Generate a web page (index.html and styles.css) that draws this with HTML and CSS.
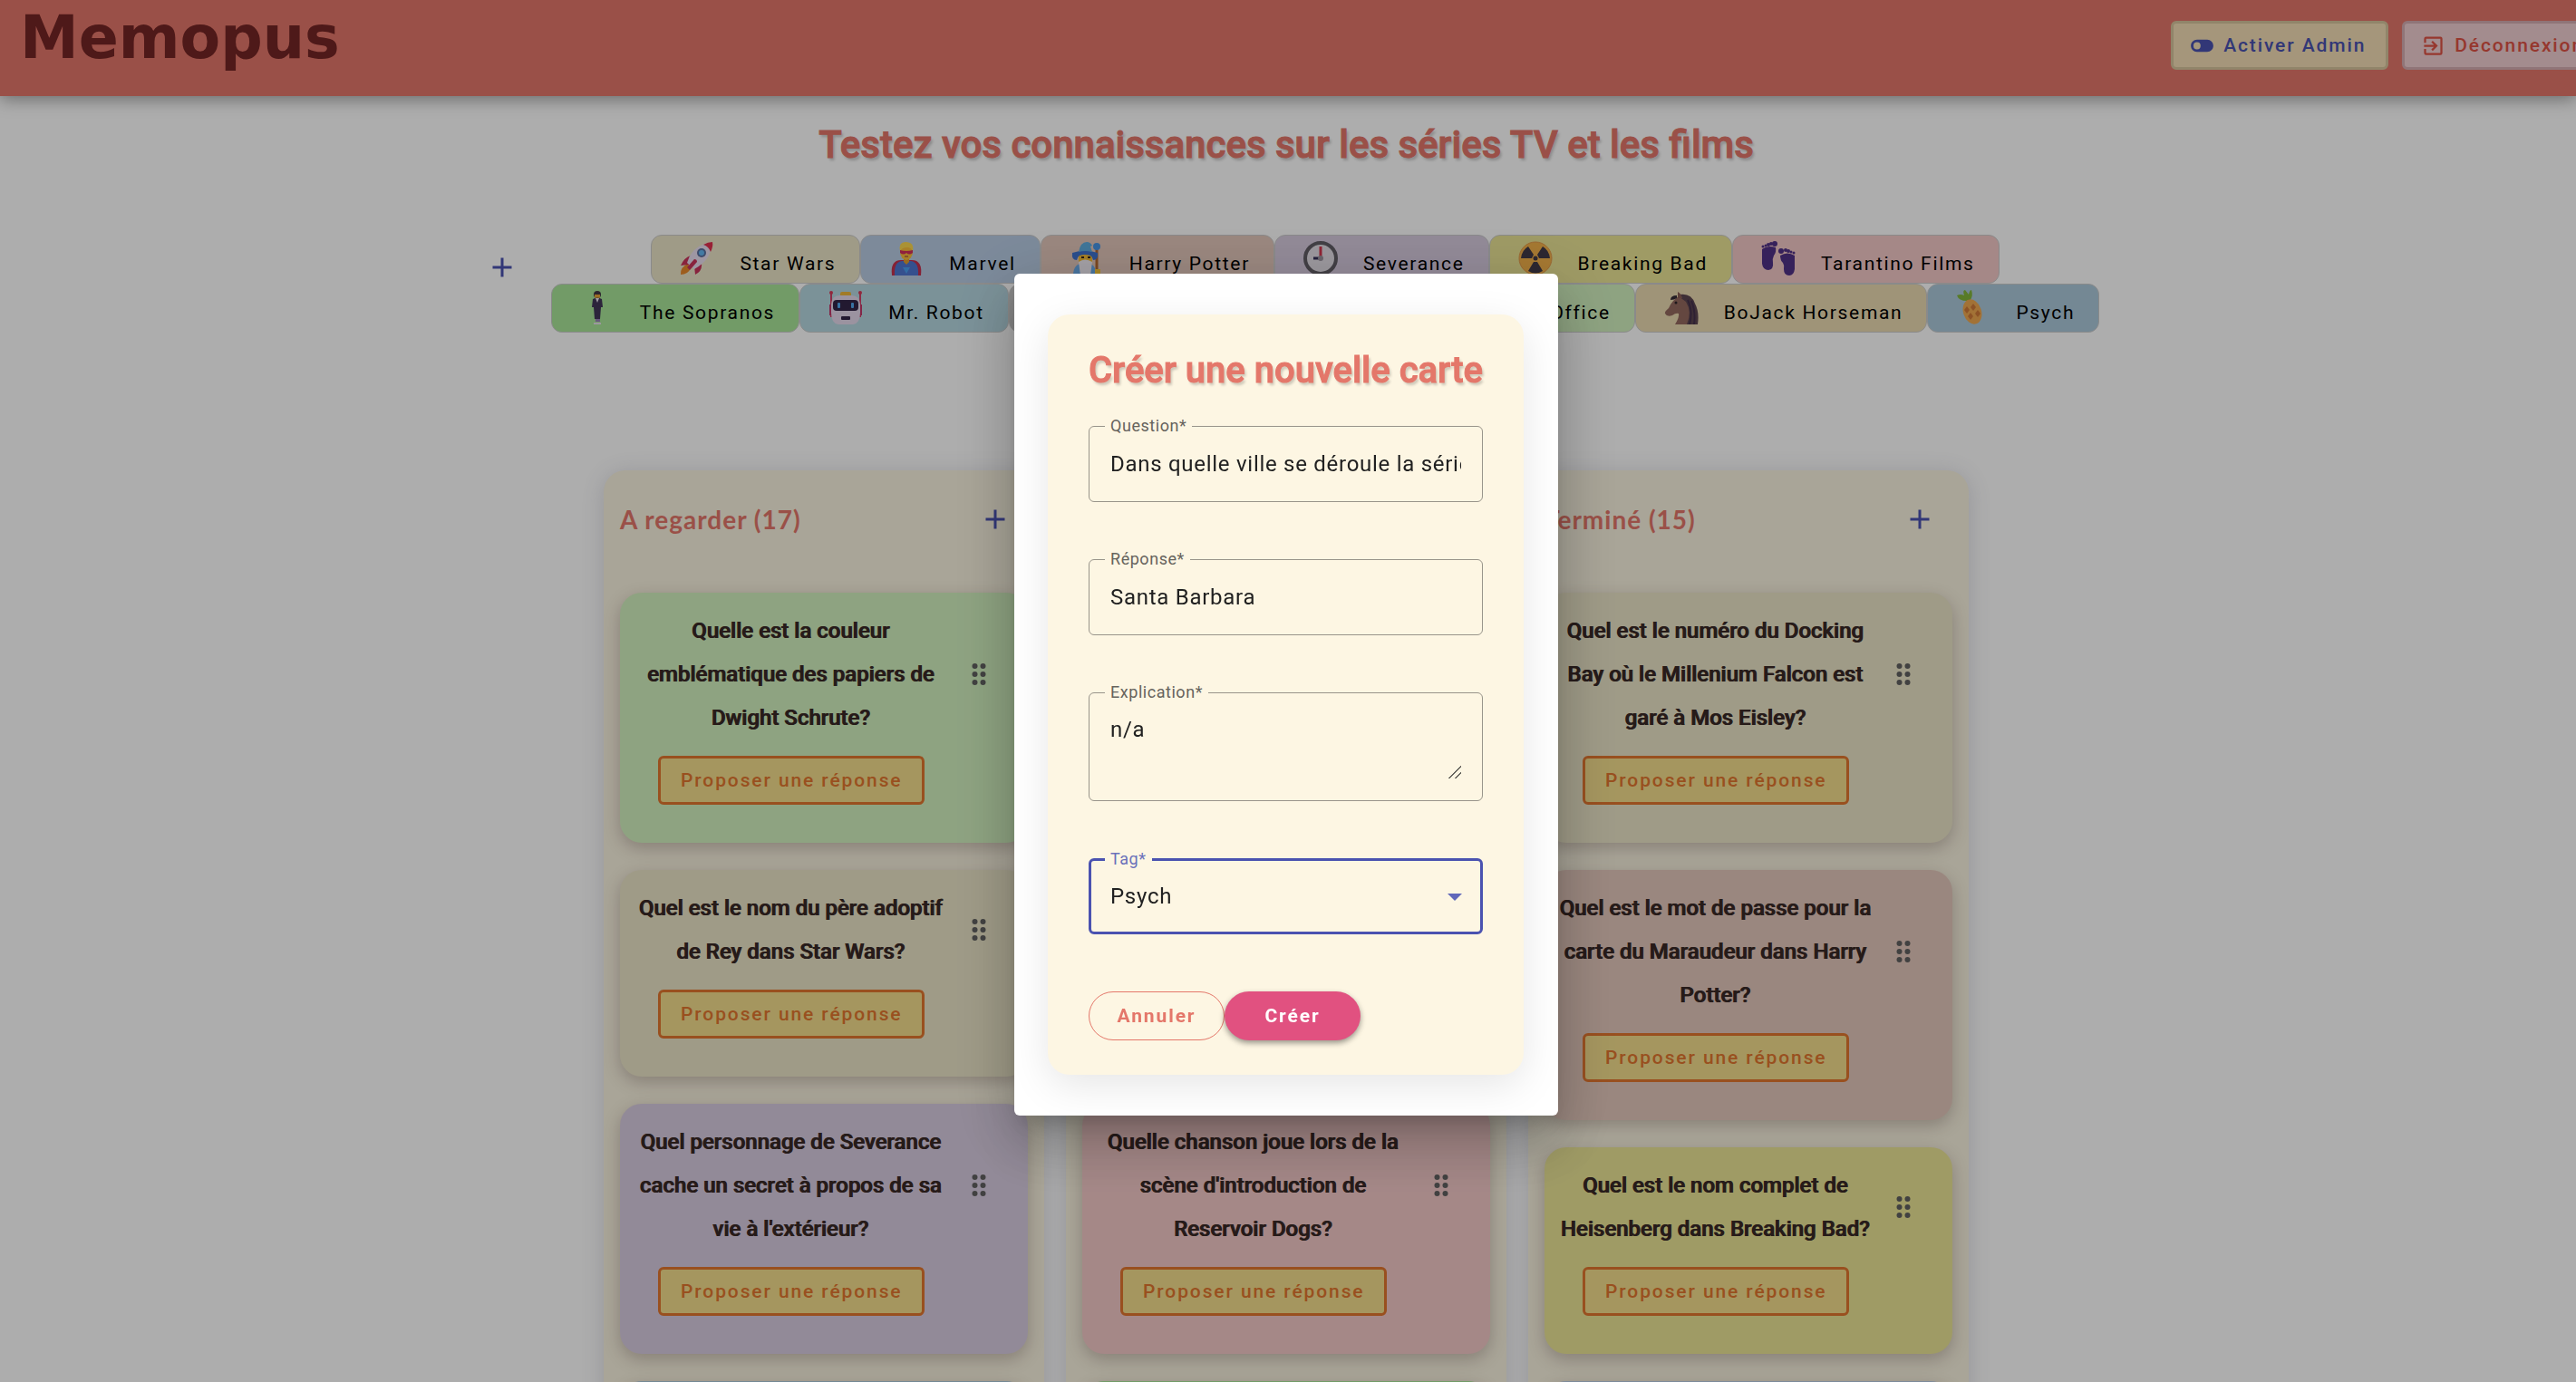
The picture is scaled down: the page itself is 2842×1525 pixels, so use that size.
FILE: index.html
```html
<!DOCTYPE html>
<html lang="fr">
<head>
<meta charset="utf-8">
<title>Memopus</title>
<link rel="stylesheet" href="styles.css">
</head>
<body>
<svg class="defs" aria-hidden="true">
  <symbol id="plus" viewBox="0 0 24 24"><path d="M19 13h-6v6h-2v-6H5v-2h6V5h2v6h6z"/></symbol>
  <symbol id="drag" viewBox="0 0 24 24"><circle cx="9" cy="6" r="2"/><circle cx="15" cy="6" r="2"/><circle cx="9" cy="12" r="2"/><circle cx="15" cy="12" r="2"/><circle cx="9" cy="18" r="2"/><circle cx="15" cy="18" r="2"/></symbol>
</svg>

<header class="topbar">
  <a class="logo" href="#">Memopus</a>
  <div class="topbar-actions">
    <button class="btn btn-admin" type="button">
      <svg class="btn-icon" viewBox="0 0 24 24"><path fill-rule="evenodd" d="M17 6H7c-3.310 0-6 2.690-6 6s2.690 6 6 6h10c3.310 0 6-2.690 6-6s-2.690-6-6-6zM7 15.500a3.500 3.500 0 1 1 0-7 3.500 3.500 0 0 1 0 7z"/></svg>
      Activer Admin
    </button>
    <button class="btn btn-logout" type="button">
      <svg class="btn-icon" viewBox="0 0 24 24"><path d="M10.090 15.590 11.500 17l5-5-5-5-1.410 1.410L12.670 11H3v2h9.670zM19 3H5a2 2 0 0 0-2 2v4h2V5h14v14H5v-4H3v4a2 2 0 0 0 2 2h14a2 2 0 0 0 2-2V5a2 2 0 0 0-2-2z"/></svg>
      Déconnexion
    </button>
  </div>
</header>

<main class="page">
  <h1 class="heading page-title">Testez vos connaissances sur les séries TV et les films</h1>

  <section class="tags">
    <button class="icon-btn" type="button" aria-label="Ajouter un tag"><svg><use href="#plus"/></svg></button>
    <ul class="tag-list">
      <li class="tag t-starwars"><svg class="emoji" viewBox="0 0 38 38">
        <path d="M9 25Q0 29 1 37q8 0 11-7z" fill="#e8892b"/>
        <path d="M12 16Q5 18 1 27l9-1zM24 25q1 8-7 12l-1-9z" fill="#c9345b"/>
        <path d="M8 24Q13 5 35 1 36 20 16 31z" fill="#e9dff0"/>
        <path d="M26 4q5-3 10-3 1 5-2 11-2-6-8-8z" fill="#e0304f"/>
        <circle cx="24" cy="13" r="5" fill="#5a6f9e"/><circle cx="24" cy="13" r="3" fill="#63b5f2"/>
        <path d="M16 20q3 0 3 3l-8 9-3-3z" fill="#c9345b"/></svg>Star Wars</li>
      <li class="tag t-marvel"><svg class="emoji" viewBox="0 0 38 38">
        <path d="M3 38q-2-17 10-17h12q12 0 10 17z" fill="#c4314f"/>
        <path d="M6 38q-1-15 8-16h10q9 1 8 16z" fill="#4f77d1"/>
        <path d="M15 29h8l-4 7z" fill="#4aa0f0"/>
        <path d="M16 18h6v5l-3 3-3-3z" fill="#e09c2e"/>
        <ellipse cx="19" cy="12" rx="7" ry="9" fill="#f8bd3c"/>
        <path d="M12 11Q10 1 18 1q10 0 8 10-2-4-6-4-6 0-8 4z" fill="#fbd84f"/>
        <path d="M12 10q7 2 14 0v3q-4 3-7 0-3 3-7 0z" fill="#d5305a"/>
        <path d="M17 17h4" stroke="#8e3540"/></svg>Marvel</li>
      <li class="tag t-potter"><svg class="emoji" viewBox="0 0 38 38">
        <path d="M30 8v30" stroke="#b56a30" stroke-width="3"/><circle cx="30" cy="6" r="4" fill="#4796e8"/>
        <path d="M4 38q0-14 13-14t12 14z" fill="#6babea"/>
        <path d="M10 15h15v9H10z" fill="#f5bd35"/>
        <path d="M10 23q7-5 15 0l-2 15H12z" fill="#f1edf5"/>
        <path d="M3 13q14-5 28 0 1 8-5 8-1-4-3-5-6-2-12 0-2 1-3 5-6 0-5-8z" fill="#3f73cf"/>
        <path d="M10 12Q12 1 19 1q4 0 6 4l-2 1 2 6q-8-2-15 0z" fill="#5eaee2"/>
        <path d="M13 18h3M20 18h3" stroke="#33251e" stroke-width="2"/><path d="M28 31h6v7h-6z" fill="#f8c638"/></svg>Harry Potter</li>
      <li class="tag t-severance"><svg class="emoji" viewBox="0 0 38 38">
        <circle cx="19" cy="19" r="17" fill="#e5e0e8" stroke="#625e66" stroke-width="4"/>
        <path d="M19 6v13" stroke="#d5364e" stroke-width="3"/><path d="M11 19h8" stroke="#352f58" stroke-width="3"/><circle cx="19" cy="19" r="3" fill="#9b939f"/></svg>Severance</li>
      <li class="tag t-breaking"><svg class="emoji" viewBox="0 0 38 38">
        <circle cx="19" cy="19" r="18" fill="#f4b24a" stroke="#e59b4b"/>
        <path d="M15 19H3q1-9 8-13l6 9zM23 19h12q-1-9-8-13l-6 9zM17 23l-6 10q8 5 16 0l-6-10z" fill="#413a48"/><circle cx="19" cy="19" r="2.500" fill="#413a48"/></svg>Breaking Bad</li>
      <li class="tag t-tarantino"><svg class="emoji" viewBox="0 0 38 38" fill="#503186">
        <path d="M1 9q6-5 15-2 1 5-2 9-2 4-1 8 1 7-5 8-6 0-7-7zM37 16q-8-5-16 0 0 5 3 8 2 3 1 7 0 7 6 7 5 0 6-7z"/>
        <circle cx="2" cy="6" r="1.500"/><circle cx="5" cy="5" r="1.500"/><circle cx="8" cy="4" r="2"/><circle cx="11" cy="3" r="2"/><circle cx="15" cy="3" r="3"/>
        <circle cx="22" cy="11" r="3"/><circle cx="27" cy="10" r="2"/><circle cx="30" cy="11" r="2"/><circle cx="33" cy="12" r="1.500"/><circle cx="36" cy="13" r="1.500"/></svg>Tarantino Films</li>
      <li class="tag t-sopranos"><svg class="emoji" viewBox="0 0 38 38">
        <circle cx="19" cy="5" r="4" fill="#423443"/><path d="M16 5h6v3q-3 3-6 0z" fill="#e5a337"/>
        <path d="M14 10q5-3 10 0l1 9h-2l-1 13h-3V22v10h-3l-1-13h-2z" fill="#413657"/><path d="m17 9 2 5 2-5z" fill="#e9e5ef"/>
        <path d="M17 32h5v3h-5z" fill="#9a82b9"/><path d="M15 37h8" stroke="#e5e0e8" stroke-width="2"/></svg>The Sopranos</li>
      <li class="tag t-robot"><svg class="emoji" viewBox="0 0 38 38">
        <path d="M3 3v27M35 3v27" stroke="#d04068" stroke-width="2"/><circle cx="3" cy="3" r="2" fill="#d63a58"/><circle cx="35" cy="3" r="2" fill="#d63a58"/>
        <path d="M1 16h4v12H1zM33 16h4v12h-4z" fill="#c0396b"/>
        <rect x="13" y="2" width="12" height="7" rx="2" fill="#eeb53b"/>
        <path d="M3 16Q4 6 12 6h14q8 0 9 10v9q0 12-8 13H11q-8-1-8-13z" fill="#e5d9ec"/>
        <rect x="5" y="11" width="28" height="12" rx="4" fill="#332648"/>
        <rect x="10" y="14" width="3" height="6" rx="1" fill="#53a8ef"/><rect x="25" y="14" width="3" height="6" rx="1" fill="#53a8ef"/>
        <rect x="14" y="29" width="10" height="4" rx="1" fill="#332648"/></svg>Mr. Robot</li>
      <li class="tag t-plain"><span class="emoji"></span>Mad Men</li>
      <li class="tag t-plain"><span class="emoji"></span>Futurama</li>
      <li class="tag t-office"><span class="emoji"></span>The Office</li>
      <li class="tag t-bojack"><svg class="emoji" viewBox="0 0 38 38">
        <path d="M17 5q13-2 17 10 5 9 3 23H21q-2-9-6-18z" fill="#5c4650"/>
        <path d="M16 7q-7 4-11 13-5 4-4 6 2 4 8 2 4-3 7-2 1 4-4 12h13q6-14-1-25z" fill="#94695f"/>
        <path d="M15 9V2q4 2 5 7z" fill="#8a5e55"/><path d="M14 6q-7 0-7 5 4 0 7-2z" fill="#352b35"/><circle cx="13" cy="14" r="1.500" fill="#2c2228"/>
        <path d="M26 11q6 12 2 27M30 12q5 12 3 26" stroke="#46324c" stroke-width="2" fill="none"/></svg>BoJack Horseman</li>
      <li class="tag t-psych"><svg class="emoji" viewBox="0 0 38 38">
        <path d="M12 12Q3 12 1 6q4-2 8 0Q7 0 10 0l4 5q1-5 3-5 2 6-1 11z" fill="#82b53c"/>
        <ellipse cx="18" cy="24" rx="10" ry="14" transform="rotate(-18 18 24)" fill="#efa850"/>
        <path d="m12 18 3 4-3 4-3-4zM19 15l3 4-3 4-3-4zM16 25l3 4-3 4-3-4zM24 22l3 4-3 4-3-4z" fill="#cf7a38"/></svg>Psych</li>
    </ul>
  </section>

  <section class="board">
    <section class="column">
      <header class="column-head"><h2 class="column-title">A regarder (17)</h2><button class="icon-btn" type="button" aria-label="Ajouter une carte"><svg><use href="#plus"/></svg></button></header>
      <article class="card t-office">
        <div class="card-row"><p class="question">Quelle est la couleur emblématique des papiers de Dwight Schrute?</p><svg class="drag"><use href="#drag"/></svg></div>
        <button class="btn btn-answer" type="button">Proposer une réponse</button>
      </article>
      <article class="card t-starwars">
        <div class="card-row"><p class="question">Quel est le nom du père adoptif de Rey dans Star Wars?</p><svg class="drag"><use href="#drag"/></svg></div>
        <button class="btn btn-answer" type="button">Proposer une réponse</button>
      </article>
      <article class="card t-severance">
        <div class="card-row"><p class="question">Quel personnage de Severance cache un secret à propos de sa vie à l'extérieur?</p><svg class="drag"><use href="#drag"/></svg></div>
        <button class="btn btn-answer" type="button">Proposer une réponse</button>
      </article>
      <article class="card t-psych"></article>
    </section>

    <section class="column">
      <header class="column-head"><h2 class="column-title">En cours (16)</h2><button class="icon-btn" type="button" aria-label="Ajouter une carte"><svg><use href="#plus"/></svg></button></header>
      <article class="card card-tall t-marvel"></article>
      <article class="card t-tarantino">
        <div class="card-row"><p class="question">Quelle chanson joue lors de la scène d'introduction de Reservoir Dogs?</p><svg class="drag"><use href="#drag"/></svg></div>
        <button class="btn btn-answer" type="button">Proposer une réponse</button>
      </article>
      <article class="card t-sopranos"></article>
    </section>

    <section class="column">
      <header class="column-head"><h2 class="column-title">Terminé (15)</h2><button class="icon-btn" type="button" aria-label="Ajouter une carte"><svg><use href="#plus"/></svg></button></header>
      <article class="card t-starwars">
        <div class="card-row"><p class="question">Quel est le numéro du Docking Bay où le Millenium Falcon est garé à Mos Eisley?</p><svg class="drag"><use href="#drag"/></svg></div>
        <button class="btn btn-answer" type="button">Proposer une réponse</button>
      </article>
      <article class="card t-potter">
        <div class="card-row"><p class="question">Quel est le mot de passe pour la carte du Maraudeur dans Harry Potter?</p><svg class="drag"><use href="#drag"/></svg></div>
        <button class="btn btn-answer" type="button">Proposer une réponse</button>
      </article>
      <article class="card t-breaking">
        <div class="card-row"><p class="question">Quel est le nom complet de Heisenberg dans Breaking Bad?</p><svg class="drag"><use href="#drag"/></svg></div>
        <button class="btn btn-answer" type="button">Proposer une réponse</button>
      </article>
      <article class="card t-marvel"></article>
    </section>
  </section>
</main>

<div class="backdrop">
  <div class="dialog" role="dialog" aria-modal="true" aria-labelledby="dialog-title">
    <form class="form">
      <h2 class="heading form-title" id="dialog-title">Créer une nouvelle carte</h2>
      <div class="field">
        <label for="question">Question*</label>
        <input id="question" type="text" value="Dans quelle ville se déroule la série Psych?">
      </div>
      <div class="field">
        <label for="reponse">Réponse*</label>
        <input id="reponse" type="text" value="Santa Barbara">
      </div>
      <div class="field field-area">
        <label for="explication">Explication*</label>
        <textarea id="explication">n/a</textarea>
      </div>
      <div class="field field-focus">
        <label for="tag">Tag*</label>
        <select id="tag"><option>Psych</option><option>Star Wars</option><option>Marvel</option></select>
        <svg class="arrow" viewBox="0 0 16 8"><path d="M0 0h16L8 8z"/></svg>
      </div>
      <div class="form-actions">
        <button class="pill pill-cancel" type="button">Annuler</button>
        <button class="pill pill-create" type="submit">Créer</button>
      </div>
    </form>
  </div>
</div>
</body>
</html>
```
FILE: styles.css
```css
* { box-sizing: border-box; }

:root {
  --coral: #e4776a;
  --indigo: #4a52b0;
  --cream: #fdf6e3;
}

html, body { height: 100%; }

body {
  margin: 0;
  overflow: hidden;
  background: #fff;
  font-family: Roboto, "Liberation Sans", sans-serif;
}

h1, h2, p, ul { margin: 0; padding: 0; }
button, input, textarea, select { font-family: inherit; }
.defs { display: none; }

/* Top bar */
.topbar {
  display: flex;
  justify-content: space-between;
  align-items: flex-start;
  height: 106px;
  padding: 0 0 0 22px;
  background: var(--coral);
  box-shadow: 0 3px 18px rgba(0, 0, 0, .4);
}

.logo {
  font: bold 65px/83px "DejaVu Sans", sans-serif;
  color: #732525;
  text-decoration: none;
}

.topbar-actions {
  display: flex;
  flex: none;
  gap: 15px;
  margin: 23px -34px 0 0;
}

.btn {
  display: flex;
  align-items: center;
  justify-content: center;
  height: 54px;
  padding: 0 22px 0 18px;
  border: 3px solid;
  border-radius: 6px;
  font-size: 21px;
  font-weight: 500;
  letter-spacing: .09em;
  white-space: nowrap;
}

.btn-icon { width: 27px; height: 27px; margin-right: 10px; fill: currentColor; }
.btn-admin { background: #f3deb5; border-color: #d6c59c; color: var(--indigo); }
.btn-logout { background: #f1ced1; border-color: #d4adb2; color: #dd5245; }

.btn-answer {
  padding: 0 22px;
  background: #f4de8d;
  border-color: #e2762f;
  color: #e2762f;
}

/* Page */
.page {
  height: calc(100% - 106px);
  padding: 24px 4px 0 0;
  overflow: hidden;
}

.heading {
  color: var(--coral);
  font-weight: 500;
  -webkit-text-stroke: 1px currentColor;
  text-align: center;
  text-shadow: 2px 3px 3px rgba(0, 0, 0, .2);
  white-space: nowrap;
}

.page-title { font-size: 42px; line-height: 60px; }

.icon-btn {
  flex: none;
  display: grid;
  place-items: center;
  width: 72px;
  height: 72px;
  padding: 0;
  border: 0;
  background: none;
}

.icon-btn svg { width: 36px; height: 36px; fill: var(--indigo); }

/* Tags */
.tags {
  display: flex;
  justify-content: center;
  gap: 14px;
  margin-top: 69px;
}

.tag-list {
  display: flex;
  flex-wrap: wrap;
  justify-content: center;
  width: 1716px;
  list-style: none;
}

.tag {
  display: flex;
  height: 54px;
  padding: 6px 26px 0 31px;
  border: 1px solid #ccc;
  border-radius: 12px;
  font-size: 21px;
  line-height: 50px;
  letter-spacing: .08em;
  color: #000;
}

.emoji { flex: none; width: 38px; height: 38px; margin-right: 28px; }

.t-starwars { background: #ebe5c8; }
.t-marvel { background: #b8cce4; }
.t-potter { background: #e4c8bc; }
.t-severance { background: #d8cce0; }
.t-breaking { background: #ebe596; }
.t-tarantino { background: #f3c9c8; }
.t-sopranos { background: #a8e599; }
.t-robot { background: #b6d7e1; }
.t-plain { background: #c8c8c8; }
.t-office { background: #d2f1bf; }
.t-bojack { background: #ebdbb2; }
.t-psych { background: #acc9db; }

/* Board */
.board {
  display: flex;
  justify-content: center;
  align-items: flex-start;
  gap: 24px;
  margin-top: 152px;
}

.column {
  display: flex;
  flex-direction: column;
  gap: 30px;
  width: 486px;
  min-height: 1200px;
  padding: 18px;
  border-radius: 24px;
  background: #f9f3e0;
  box-shadow: 0 3px 24px rgba(80, 80, 110, .2);
}

.column-head {
  display: flex;
  justify-content: space-between;
  align-items: center;
  margin-bottom: 15px;
}

.column-title {
  font: bold 28px/36px Lato, sans-serif;
  letter-spacing: 1px;
  color: var(--coral);
}

.card {
  min-height: 180px;
  padding: 18px 13px 42px;
  border-radius: 24px;
  box-shadow: 0 6px 18px rgba(60, 30, 30, .25);
}

.card-tall { min-height: 534px; }
.card-row { display: flex; align-items: center; }

.question {
  width: 350px;
  font-size: 24px;
  line-height: 48px;
  font-weight: 500;
  text-align: center;
  text-shadow: 1px 0 currentColor;
  color: #382826;
}

.drag { width: 36px; height: 36px; margin-left: 15px; fill: #616161; }
.card .btn { margin: 18px 0 0 29px; }

/* Dialog */
.backdrop {
  position: fixed;
  inset: 0;
  display: flex;
  align-items: center;
  justify-content: center;
  padding: 8px 4px 0 0;
  background: rgba(0, 0, 0, .32);
}

.dialog {
  width: 600px;
  padding: 45px 38px 45px 37px;
  border-radius: 6px;
  background: #fff;
  box-shadow: 0 16px 22px -10px rgba(0, 0, 0, .2), 0 36px 57px 4px rgba(0, 0, 0, .14), 0 14px 69px 12px rgba(0, 0, 0, .12);
}

.form {
  padding: 33px 45px 38px;
  border-radius: 24px;
  background: var(--cream);
  box-shadow: 0 12px 45px rgba(0, 0, 0, .1);
}

.form-title { margin-bottom: 32px; font-size: 40px; line-height: 58px; }

.field {
  position: relative;
  height: 84px;
  margin-bottom: 63px;
  padding: 0 23px;
  border: 1px solid #98948a;
  border-radius: 6px;
}

.field label {
  position: absolute;
  top: -13px;
  left: 17px;
  padding: 0 6px;
  background: var(--cream);
  font-size: 18px;
  line-height: 24px;
  letter-spacing: .03em;
  color: #66635d;
}

.field input, .field textarea, .field select {
  display: block;
  width: 100%;
  height: 82px;
  padding: 0;
  border: 0;
  outline: 0;
  background: none;
  color: #212121;
  font-size: 24px;
  letter-spacing: .03em;
  appearance: none;
}

.field-area { height: 120px; padding-top: 22px; }
.field textarea { height: 72px; line-height: 36px; resize: vertical; }

.field textarea::-webkit-resizer {
  background: linear-gradient(135deg, transparent 52%, #66635d 52% 59%, transparent 59% 76%, #66635d 76% 83%, transparent 83%);
}

.field-focus { padding: 0 21px; border: 3px solid var(--indigo); }
.field-focus label { top: -14px; left: 15px; color: #6a71ba; }
.field-focus select { height: 78px; }

.arrow {
  position: absolute;
  right: 20px;
  top: 36px;
  width: 16px;
  height: 8px;
  fill: #6168ba;
  pointer-events: none;
}

.form-actions { display: flex; }

.pill {
  width: 150px;
  height: 54px;
  padding: 0;
  border: 0;
  border-radius: 27px;
  font-size: 21px;
  font-weight: 700;
  letter-spacing: .09em;
}

.pill-cancel {
  border: 1px solid var(--coral);
  background: none;
  color: var(--coral);
}

.pill-create {
  background: #e15180;
  color: #fff;
  box-shadow: 0 3px 6px rgba(0, 0, 0, .4);
}
```
